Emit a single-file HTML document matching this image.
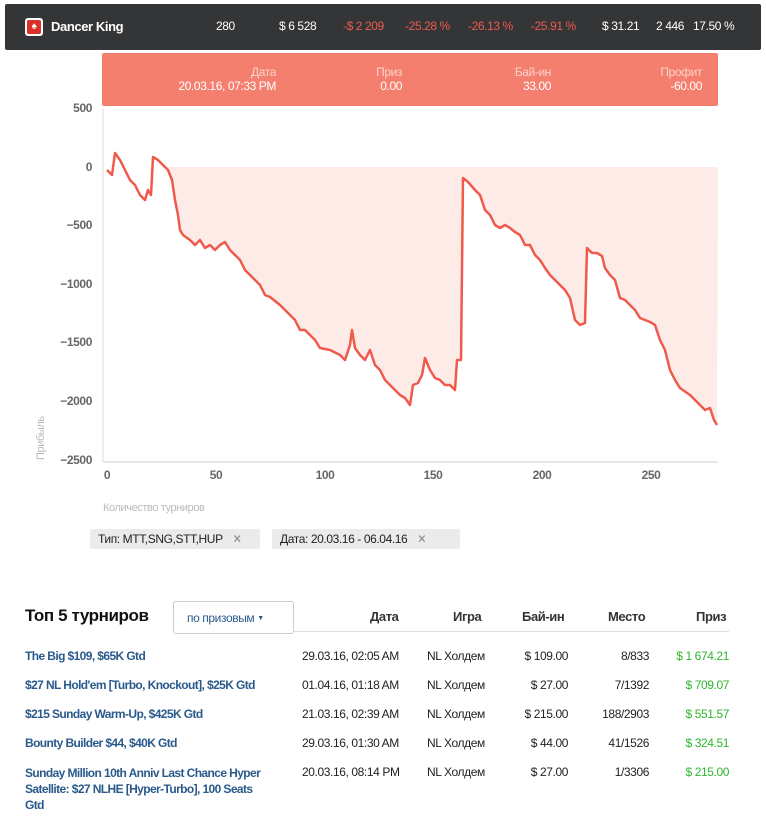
<!DOCTYPE html>
<html><head><meta charset="utf-8"><style>
*{margin:0;padding:0;box-sizing:border-box}
body{width:766px;height:818px;background:#fff;position:relative;overflow:hidden;font-family:"Liberation Sans Narrow","Liberation Sans","DejaVu Sans Condensed",sans-serif;font-size:12px;color:#222;letter-spacing:-0.4px}
.a{position:absolute;white-space:nowrap}
.bar{position:absolute;left:5px;top:4px;width:756px;height:46px;background:#343537;border-radius:2px}
.bar .a{color:#fff;top:15px;font-size:12px}
.r{color:#f05a4f!important}
.tip{position:absolute;left:102px;top:53px;width:616px;height:53px;background:#f47f6f;border-radius:2px}
.tip .l{color:#fbd2cc;top:12px;font-size:12px;text-align:right}
.tip .v{color:#fff;top:26px;font-size:12px;text-align:right}
.chip{position:absolute;top:529px;height:20px;background:#ebebeb;border-radius:2px;font-size:12px;color:#222;padding:3px 8px}
.chip span{color:#888;margin-left:10px}
.th{top:609px;font-size:13px;font-weight:bold;color:#333}
.lnk{color:#2a5a8c;font-weight:bold;font-size:12px;letter-spacing:-0.6px}
.td{font-size:12px;color:#222}
.g{color:#2db52d}
</style></head><body>
<div class="bar">
  <div style="position:absolute;left:20px;top:14px;width:18px;height:18px;background:#fff;border-radius:3px"><div style="position:absolute;left:2px;top:2px;width:14px;height:14px;background:#d6322a;border-radius:2px;color:#fff;font-size:10px;text-align:center;line-height:14px">♠</div></div>
  <div class="a" style="left:46px;font-weight:bold;font-size:13px">Dancer King</div>
  <div class="a" style="left:211px">280</div>
  <div class="a" style="left:274px">$ 6 528</div>
  <div class="a r" style="left:338px">-$ 2 209</div>
  <div class="a r" style="left:400px">-25.28 %</div>
  <div class="a r" style="left:463px">-26.13 %</div>
  <div class="a r" style="left:526px">-25.91 %</div>
  <div class="a" style="left:597px">$ 31.21</div>
  <div class="a" style="left:651px">2 446</div>
  <div class="a" style="left:688px">17.50 %</div>
</div>
<div class="tip">
  <div class="a l" style="right:442px">Дата</div><div class="a v" style="right:442px">20.03.16, 07:33 PM</div>
  <div class="a l" style="right:316px">Приз</div><div class="a v" style="right:316px">0.00</div>
  <div class="a l" style="right:167px">Бай-ин</div><div class="a v" style="right:167px">33.00</div>
  <div class="a l" style="right:16px">Профит</div><div class="a v" style="right:16px">-60.00</div>
</div>
<svg class="a" style="left:0;top:0" width="766" height="520" font-family="Liberation Sans Narrow, Liberation Sans, sans-serif">
  <g font-size="12" font-weight="bold" fill="#666" text-anchor="end">
    <text x="92" y="112">500</text><text x="92" y="171">0</text><text x="92" y="229">−500</text>
    <text x="92" y="288">−1000</text><text x="92" y="346">−1500</text><text x="92" y="405">−2000</text><text x="92" y="464">−2500</text>
  </g>
  <g font-size="12" font-weight="bold" fill="#666" text-anchor="middle">
    <text x="107" y="479">0</text><text x="216" y="479">50</text><text x="325" y="479">100</text>
    <text x="433" y="479">150</text><text x="542" y="479">200</text><text x="651" y="479">250</text>
  </g>
  <text x="103" y="511" font-size="11" fill="#bbb">Количество турниров</text>
  <text x="44" y="460" font-size="11" fill="#bbb" transform="rotate(-90 44 460)">Прибыль</text>
  <line x1="103" y1="462" x2="718" y2="462" stroke="#ccc"/>
  <line x1="103" y1="108" x2="103" y2="462" stroke="#ddd"/>
  <polygon fill="#fdebe8" points="107,167 718,167 717,425 714,420 710,408 705,410 700,405 690,395 680,388 675,380 670,370 665,350 660,340 655,325 650,322 645,320 640,318 635,310 630,305 625,300 620,298 615,280 610,275 605,268 602,256 597,253 592,253 587,248 585,323 580,325 575,320 570,298 565,290 560,285 555,280 550,275 545,268 540,260 535,255 530,245 525,245 520,235 515,232 510,228 505,225 500,228 495,225 490,215 485,210 480,195 475,190 468,182 463,178 461,360 457,360 455,390 450,385 445,385 440,380 435,378 430,370 425,358 422,375 418,383 413,385 410,405 405,398 400,395 395,390 390,385 385,380 380,370 375,365 370,350 365,360 360,355 355,348 352,330 350,345 345,360 340,355 330,350 320,348 315,340 310,335 305,330 300,330 295,320 290,315 280,305 270,297 265,295 260,285 255,280 250,275 245,270 240,260 235,255 230,250 225,242 220,245 215,250 210,245 205,248 200,240 195,245 190,240 183,235 180,230 178,215 175,200 172,180 168,170 163,167"/>
  <polyline fill="none" stroke="#ef5a4c" stroke-width="2.5" stroke-linejoin="round" points="107,170 112,175 115,153 120,160 125,170 130,180 135,185 140,195 145,200 148,190 151,195 153,157 158,160 163,165 168,170 172,180 175,200 178,215 180,230 183,235 190,240 195,245 200,240 205,248 210,245 215,250 220,245 225,242 230,250 235,255 240,260 245,270 250,275 255,280 260,285 265,295 270,297 280,305 290,315 295,320 300,330 305,330 310,335 315,340 320,348 330,350 340,355 345,360 350,345 352,330 355,348 360,355 365,360 370,350 375,365 380,370 385,380 390,385 395,390 400,395 405,398 410,405 413,385 418,383 422,375 425,358 430,370 435,378 440,380 445,385 450,385 455,390 457,360 461,360 463,178 468,182 475,190 480,195 485,210 490,215 495,225 500,228 505,225 510,228 515,232 520,235 525,245 530,245 535,255 540,260 545,268 550,275 555,280 560,285 565,290 570,298 575,320 580,325 585,323 587,248 592,253 597,253 602,256 605,268 610,275 615,280 620,298 625,300 630,305 635,310 640,318 645,320 650,322 655,325 660,340 665,350 670,370 675,380 680,388 690,395 700,405 705,410 710,408 714,420 717,425"/>
</svg>
<div class="chip" style="left:90px;width:170px">Тип: MTT,SNG,STT,HUP<span>✕</span></div>
<div class="chip" style="left:272px;width:188px">Дата: 20.03.16 - 06.04.16<span>✕</span></div>

<div class="a" style="left:25px;top:606px;font-size:17px;font-weight:bold;color:#111">Топ 5 турниров</div>
<div class="a" style="left:173px;top:601px;width:121px;height:33px;border:1px solid #ccc;border-radius:3px;color:#2a5a8c;font-size:12px;padding:9px 0 0 13px">по призовым <span style="font-size:7px;vertical-align:2px">▼</span></div>
<div class="a" style="left:294px;top:631px;width:435px;height:1px;background:#ddd"></div>
<div class="a th" style="left:370px">Дата</div>
<div class="a th" style="left:453px">Игра</div>
<div class="a th" style="left:522px">Бай-ин</div>
<div class="a th" style="left:608px">Место</div>
<div class="a th" style="left:696px">Приз</div>

<div class="a lnk" style="left:25px;top:649px">The Big $109, $65K Gtd</div>
<div class="a lnk" style="left:25px;top:678px">$27 NL Hold'em [Turbo, Knockout], $25K Gtd</div>
<div class="a lnk" style="left:25px;top:707px">$215 Sunday Warm-Up, $425K Gtd</div>
<div class="a lnk" style="left:25px;top:736px">Bounty Builder $44, $40K Gtd</div>
<div class="a lnk" style="left:25px;top:765px;line-height:16px">Sunday Million 10th Anniv Last Chance Hyper<br>Satellite: $27 NLHE [Hyper-Turbo], 100 Seats<br>Gtd</div>

<div class="a td" style="left:302px;top:649px">29.03.16, 02:05 AM</div>
<div class="a td" style="left:302px;top:678px">01.04.16, 01:18 AM</div>
<div class="a td" style="left:302px;top:707px">21.03.16, 02:39 AM</div>
<div class="a td" style="left:302px;top:736px">29.03.16, 01:30 AM</div>
<div class="a td" style="left:302px;top:765px">20.03.16, 08:14 PM</div>

<div class="a td" style="left:427px;top:649px">NL Холдем</div>
<div class="a td" style="left:427px;top:678px">NL Холдем</div>
<div class="a td" style="left:427px;top:707px">NL Холдем</div>
<div class="a td" style="left:427px;top:736px">NL Холдем</div>
<div class="a td" style="left:427px;top:765px">NL Холдем</div>

<div class="a td" style="right:198px;top:649px">$ 109.00</div>
<div class="a td" style="right:198px;top:678px">$ 27.00</div>
<div class="a td" style="right:198px;top:707px">$ 215.00</div>
<div class="a td" style="right:198px;top:736px">$ 44.00</div>
<div class="a td" style="right:198px;top:765px">$ 27.00</div>

<div class="a td" style="right:117px;top:649px">8/833</div>
<div class="a td" style="right:117px;top:678px">7/1392</div>
<div class="a td" style="right:117px;top:707px">188/2903</div>
<div class="a td" style="right:117px;top:736px">41/1526</div>
<div class="a td" style="right:117px;top:765px">1/3306</div>

<div class="a td g" style="right:37px;top:649px">$ 1 674.21</div>
<div class="a td g" style="right:37px;top:678px">$ 709.07</div>
<div class="a td g" style="right:37px;top:707px">$ 551.57</div>
<div class="a td g" style="right:37px;top:736px">$ 324.51</div>
<div class="a td g" style="right:37px;top:765px">$ 215.00</div>
</body></html>
